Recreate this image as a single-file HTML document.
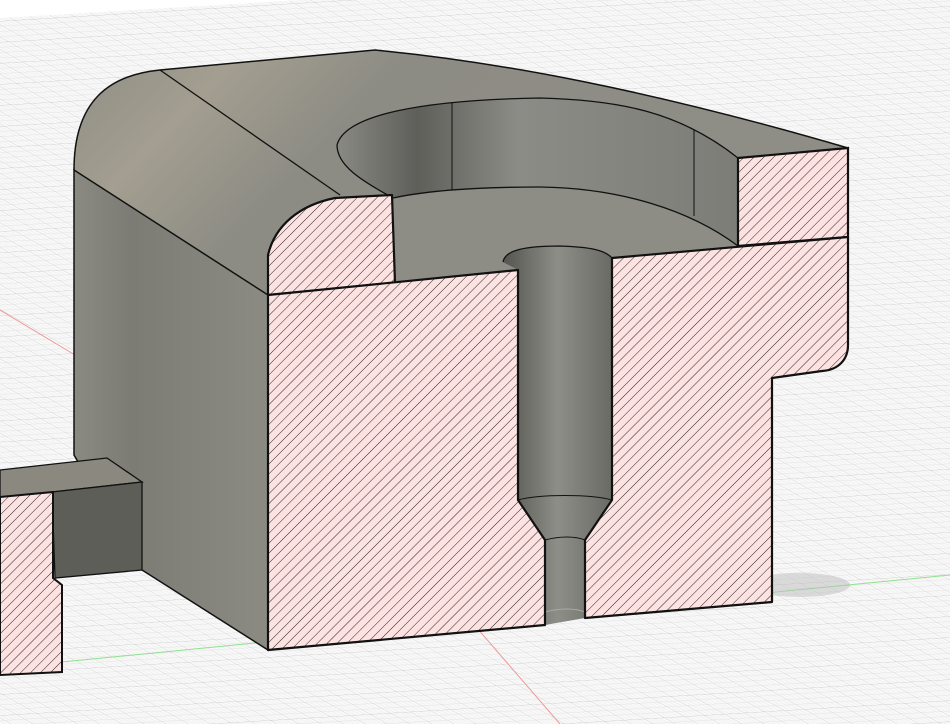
<!DOCTYPE html>
<html><head><meta charset="utf-8"><style>html,body{margin:0;padding:0;background:#fff;}svg{display:block}</style></head>
<body>
<svg width="950" height="724" viewBox="0 0 950 724" xmlns="http://www.w3.org/2000/svg">
<defs>
<pattern id="hatch" patternUnits="userSpaceOnUse" width="7" height="7" patternTransform="rotate(45)">
<rect width="7" height="7" fill="#fde2e2"/>
<line x1="0" y1="0" x2="0" y2="7" stroke="#111" stroke-width="0.9"/>
</pattern>
<pattern id="grid" patternUnits="userSpaceOnUse" width="20" height="20" patternTransform="matrix(1,-0.06,1.7,0.95,0,0)">
<rect width="20" height="20" fill="#f8f8f8"/>
<path d="M0 5H20M0 10H20M0 15H20M5 0V20M10 0V20M15 0V20" stroke="#e6e6e6" stroke-width="0.5"/>
<path d="M0 0H20" stroke="#cdcdcd" stroke-width="0.8"/>
<path d="M0 0V20" stroke="#c4c4c4" stroke-width="1"/>
</pattern>
<linearGradient id="top" x1="0" y1="0" x2="1" y2="0.3">
<stop offset="0" stop-color="#8e8d84"/><stop offset="0.2" stop-color="#a39e90"/><stop offset="0.4" stop-color="#8d8c84"/><stop offset="1" stop-color="#8f8e86"/>
</linearGradient>
<linearGradient id="left" x1="0" y1="0" x2="1" y2="0">
<stop offset="0" stop-color="#8a8a82"/><stop offset="0.3" stop-color="#7c7c75"/><stop offset="1" stop-color="#8b8b83"/>
</linearGradient>
<linearGradient id="wall" x1="0" y1="0" x2="1" y2="0">
<stop offset="0" stop-color="#8a8a84"/><stop offset="0.2" stop-color="#5f5f5a"/><stop offset="0.45" stop-color="#8c8c86"/><stop offset="1" stop-color="#7d7d77"/>
</linearGradient>
<linearGradient id="hole" x1="0" y1="0" x2="1" y2="0">
<stop offset="0" stop-color="#55554f"/><stop offset="0.5" stop-color="#8e8e88"/><stop offset="1" stop-color="#6a6a64"/>
</linearGradient>
</defs>
<rect width="950" height="724" fill="url(#grid)"/>
<path d="M0 18L300 0H0Z" fill="#fff"/>
<line x1="0" y1="668" x2="950" y2="575" stroke="#8fe08f" stroke-width="1"/>
<line x1="0" y1="310" x2="75" y2="355" stroke="#e99" stroke-width="1"/>
<line x1="470" y1="620" x2="560" y2="724" stroke="#e99" stroke-width="1"/>
<ellipse cx="800" cy="585" rx="50" ry="12" fill="#bbb" opacity="0.5"/>
<path d="M74 170 C74 100 110 75 160 70 L375 50 C500 62 650 90 848 148 L738 158 L738 246 L395 283 L268 295 Z" fill="url(#top)"/>
<path d="M74 170 L268 295 L268 650 L142 570 L74 455 Z" fill="url(#left)" stroke="#111" stroke-width="1.5"/>
<line x1="160" y1="70" x2="340" y2="195" stroke="#111" stroke-width="1.3"/>
<path d="M337 145 C345 115 420 100 540 98 C620 100 680 112 738 158 L738 246 C710 225 640 190 540 187 C460 188 420 192 393 198 C360 180 337 165 337 145Z" fill="url(#wall)"/>
<path d="M393 198 C430 190 480 187 540 187 C620 188 690 210 738 246 L738 250 L395 283Z" fill="#8d8c85"/>
<path d="M337 145 C345 115 420 100 540 98 C620 100 680 112 738 158" fill="none" stroke="#111" stroke-width="1.3"/>
<path d="M393 198 C430 190 480 187 540 187 C620 188 690 210 738 246" fill="none" stroke="#111" stroke-width="1.3"/>
<path d="M337 145 C337 165 360 180 393 198" fill="none" stroke="#111" stroke-width="1.3"/>
<line x1="452" y1="102" x2="452" y2="190" stroke="#111" stroke-width="1"/>
<line x1="694" y1="130" x2="694" y2="216" stroke="#111" stroke-width="1"/>
<path d="M503 262 C505 250 525 246 560 246 C590 247 605 250 612 258 L612 500 L585 540 L585 618 L545 625 L545 540 L518 500 L518 270 Z" fill="url(#hole)"/>
<path d="M503 262 C505 250 525 246 560 246 C590 247 605 250 612 258" fill="none" stroke="#111" stroke-width="1.3"/>
<path d="M518 500 C540 494 590 494 612 500" fill="none" stroke="#111" stroke-width="1"/>
<path d="M545 540 C560 536 575 536 585 540" fill="none" stroke="#111" stroke-width="1"/>
<path d="M545 612 C560 608 575 608 585 612" fill="none" stroke="#aaa" stroke-width="1"/>
<path d="M0 470 L107 458 L142 482 L52 492 L0 497Z" fill="#8a887f" stroke="#111" stroke-width="1.3"/>
<path d="M52 492 L142 482 L142 570 L55 578Z" fill="#5e5e58" stroke="#111" stroke-width="1.3"/>
<path d="M0 497 L53 492 L53 578 L62 585 L62 672 L0 675Z" fill="url(#hatch)" stroke="#111" stroke-width="2"/>
<path d="M268 295 L268 255 C275 225 300 205 335 198 L392 195 L395 283 Z" fill="url(#hatch)" stroke="#111" stroke-width="2.2" stroke-linejoin="round"/>
<path d="M738 158 L848 148 L848 237 L738 246Z" fill="url(#hatch)" stroke="#111" stroke-width="2.2"/>
<path d="M268 295 L518 270 L518 500 L545 540 L545 625 L268 650Z" fill="url(#hatch)" stroke="#111" stroke-width="2.2" stroke-linejoin="round"/>
<path d="M612 258 L848 237 L848 345 C848 360 838 370 822 371 L772 378 L772 602 L585 618 L585 540 L612 500Z" fill="url(#hatch)" stroke="#111" stroke-width="2.2" stroke-linejoin="round"/>
<path d="M74 170 C74 100 110 75 160 70 L375 50 C500 62 650 90 848 148" fill="none" stroke="#111" stroke-width="1.5"/>
</svg>
</body></html>
